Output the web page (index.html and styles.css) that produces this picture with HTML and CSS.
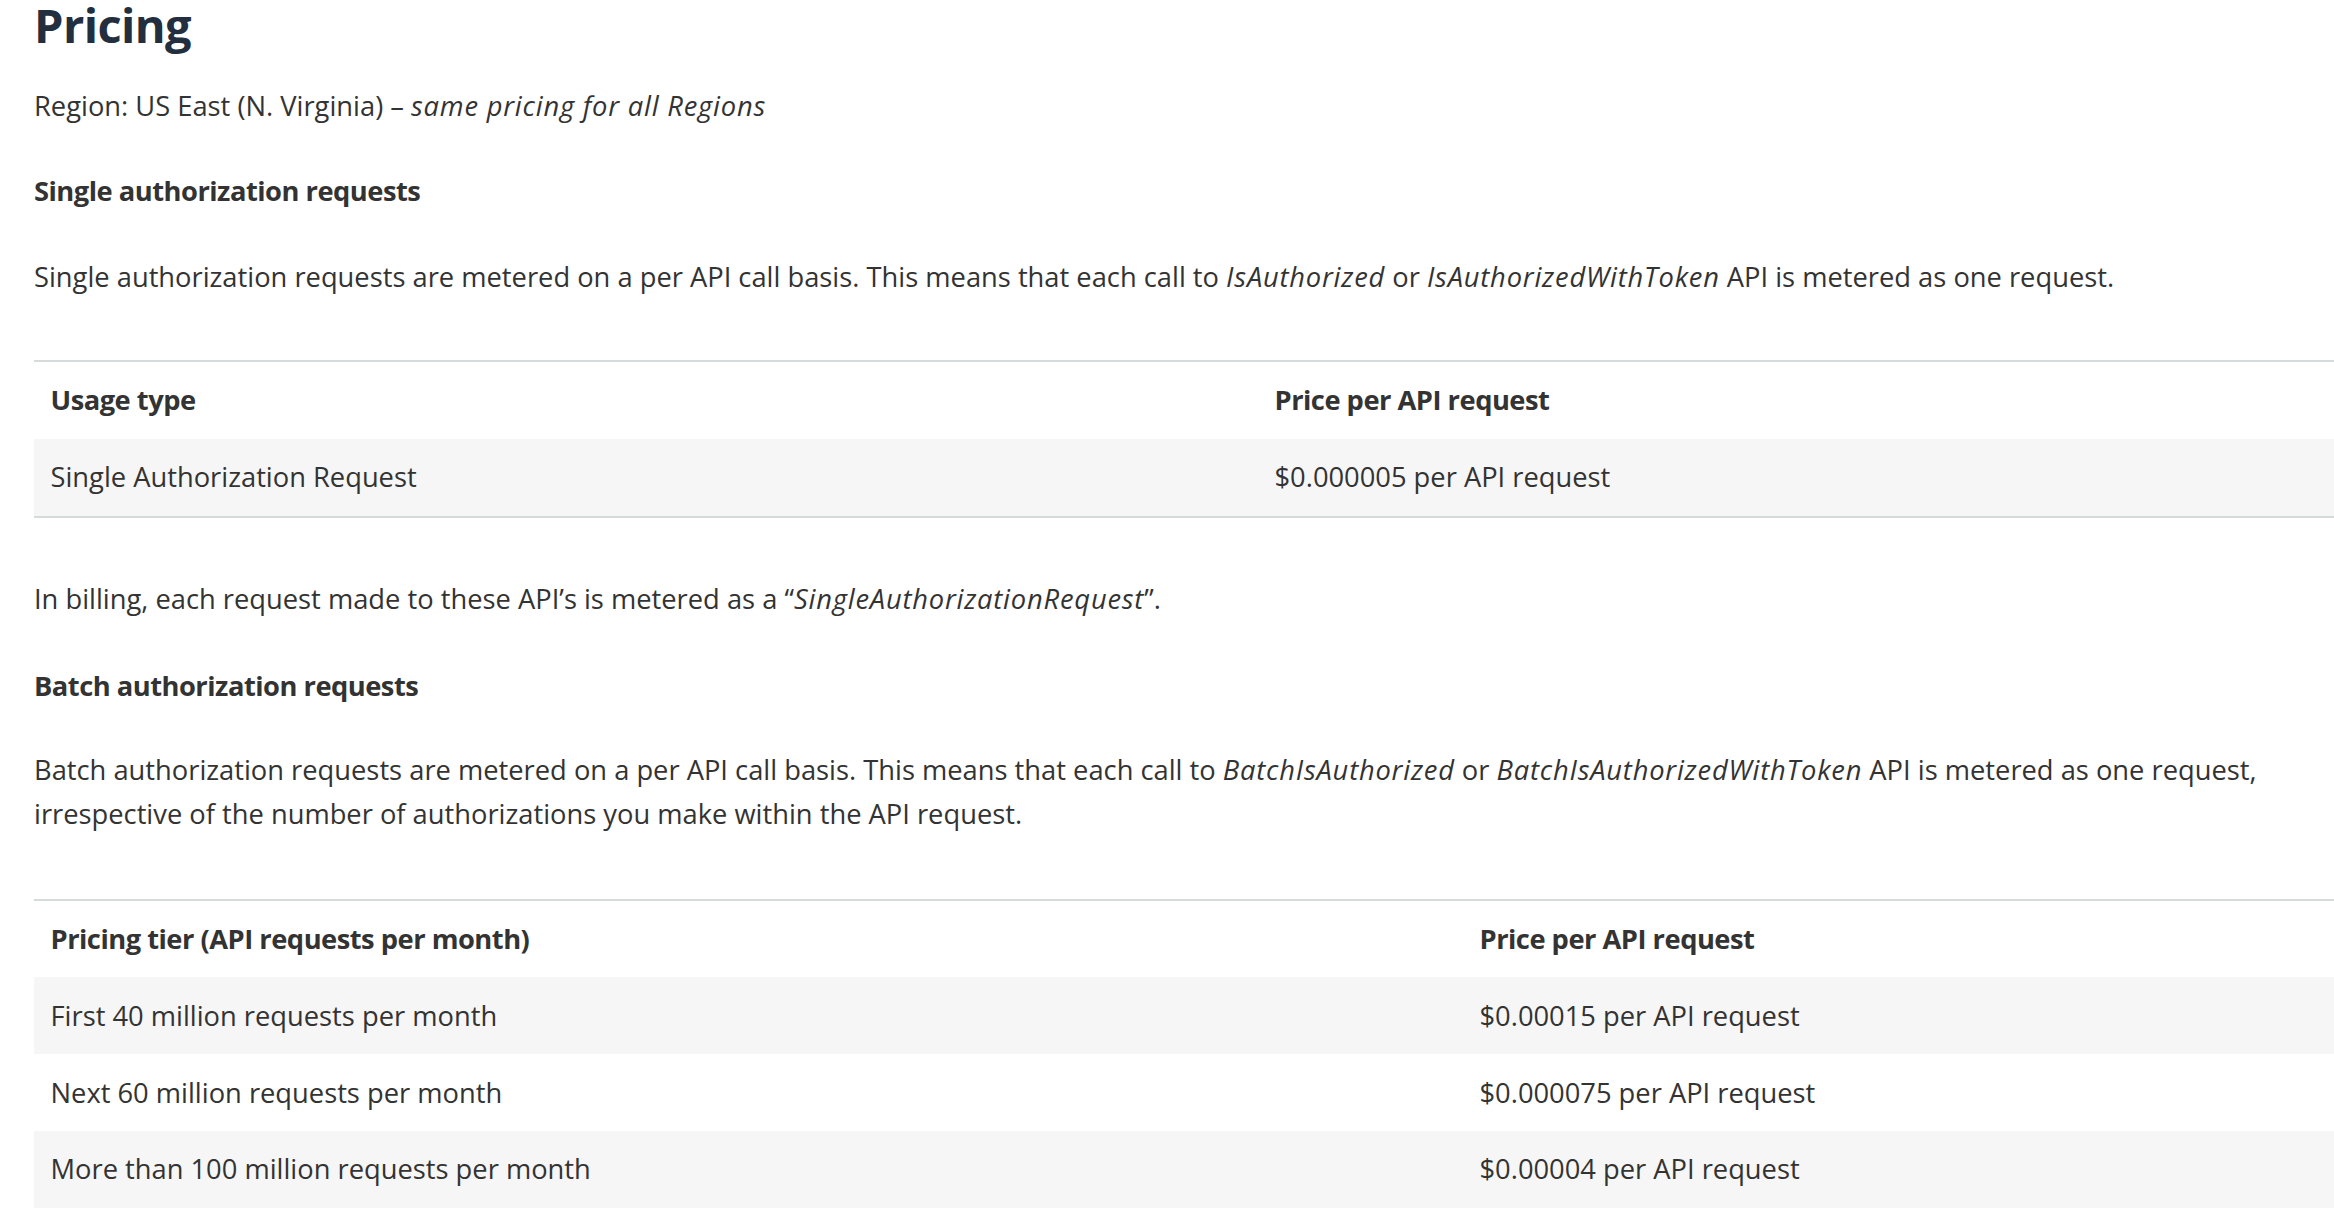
FILE: index.html
```html
<!DOCTYPE html>
<html lang="en">
<head>
<meta charset="utf-8">
<title>Pricing</title>
<link rel="stylesheet" href="styles.css">
</head>
<body>
<main class="page">
  <h2 class="title">Pricing</h2>
  <p class="text region">Region: US East (N. Virginia) – <em>same pricing for all Regions</em></p>

  <h3 class="subhead">Single authorization requests</h3>
  <p class="text before-table">Single authorization requests are metered on a per API call basis. This means that each call to <em>IsAuthorized</em> or <em>IsAuthorizedWithToken</em> API is metered as one request.</p>

  <table class="price-table single">
    <colgroup><col class="c1"><col></colgroup>
    <thead>
      <tr><th>Usage type</th><th>Price per API request</th></tr>
    </thead>
    <tbody>
      <tr><td>Single Authorization Request</td><td>$0.000005 per API request</td></tr>
    </tbody>
  </table>

  <p class="text billing">In billing, each request made to these API’s is metered as a “<em>SingleAuthorizationRequest</em>”.</p>

  <h3 class="subhead subhead-b">Batch authorization requests</h3>
  <p class="text before-table2">Batch authorization requests are metered on a per API call basis. This means that each call to <em>BatchIsAuthorized</em> or <em>BatchIsAuthorizedWithToken</em> API is metered as one request, irrespective of the number of authorizations you make within the API request.</p>

  <table class="price-table batch">
    <colgroup><col class="c1"><col></colgroup>
    <thead>
      <tr><th>Pricing tier (API requests per month)</th><th>Price per API request</th></tr>
    </thead>
    <tbody>
      <tr><td>First 40 million requests per month</td><td>$0.00015 per API request</td></tr>
      <tr><td>Next 60 million requests per month</td><td>$0.000075 per API request</td></tr>
      <tr><td>More than 100 million requests per month</td><td>$0.00004 per API request</td></tr>
    </tbody>
  </table>
</main>
</body>
</html>
```

FILE: styles.css
```css
html, body {
  margin: 0;
  padding: 0;
  background: #ffffff;
  overflow: hidden;
}

.page {
  padding: 0 0 0 34px;
  font-family: "Open Sans", "Noto Sans", sans-serif;
  font-size: 27.3px;
  line-height: 44px;
  color: #333333;
}

.title {
  margin: 0 0 34px;
  font-size: 47px;
  line-height: 50px;
  font-weight: 700;
  letter-spacing: -0.6px;
  color: #232f3e;
}

.text {
  margin: 0;
}

.text em {
  font-style: italic;
  letter-spacing: 0.8px;
}

.region {
  margin-bottom: 41px;
}

.subhead {
  margin: 0 0 42px;
  font-size: 27.3px;
  line-height: 44px;
  font-weight: 700;
  letter-spacing: -0.5px;
  color: #333333;
}

.subhead-b {
  margin-bottom: 40px;
}

.before-table {
  margin-bottom: 61px;
}

.billing {
  margin-bottom: 43px;
}

.before-table2 {
  margin-bottom: 63px;
}

.price-table {
  width: 2300px;
  table-layout: fixed;
  border-collapse: collapse;
  border-top: 2px solid #d5dbdb;
  border-bottom: 2px solid #d5dbdb;
  margin: 0 0 59px;
}

.single .c1 {
  width: 1224px;
}

.batch .c1 {
  width: 1429px;
}

.price-table th,
.price-table td {
  padding: 16.4px 16.5px;
  text-align: left;
  vertical-align: middle;
  line-height: 44px;
  white-space: nowrap;
}

.price-table th {
  font-weight: 700;
  letter-spacing: -0.5px;
  color: #333333;
}

.price-table td {
  font-weight: 400;
}

.price-table tbody tr:nth-child(odd) {
  background: #f6f6f6;
}
```
